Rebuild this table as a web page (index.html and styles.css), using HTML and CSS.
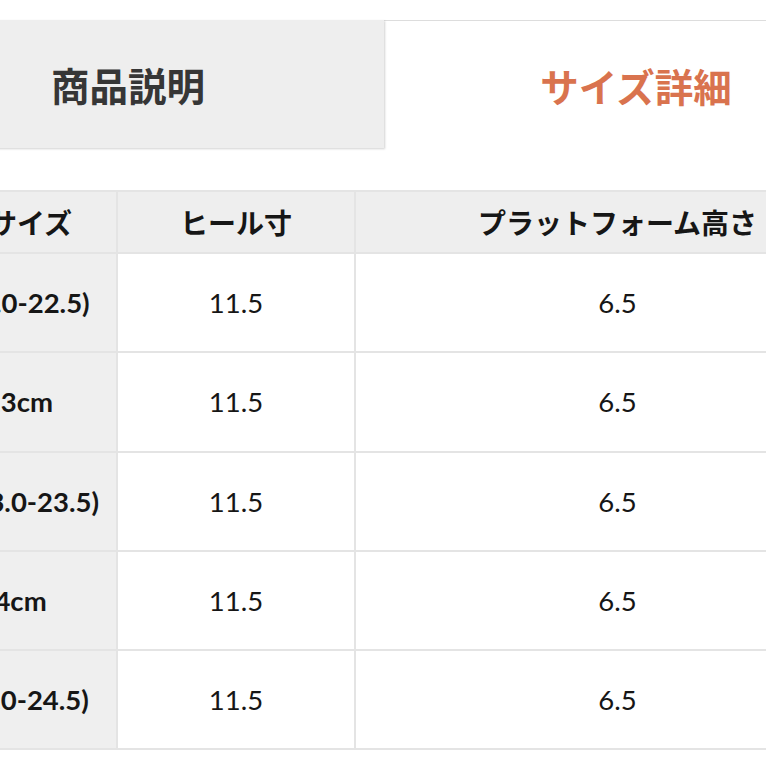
FILE: index.html
```html
<!DOCTYPE html>
<html lang="ja">
<head>
<meta charset="utf-8">
<title>サイズ詳細</title>
<link rel="stylesheet" href="styles.css">
</head>
<body>
<div class="page">
  <div class="tabs">
    <div class="tab tab-inactive">商品説明</div>
    <div class="tab tab-active">サイズ詳細</div>
  </div>
  <table class="size-table">
    <colgroup>
      <col class="col-size">
      <col class="col-heel">
      <col class="col-plat">
    </colgroup>
    <thead>
      <tr>
        <th>日本サイズ</th>
        <th>ヒール寸</th>
        <th>プラットフォーム高さ</th>
      </tr>
    </thead>
    <tbody>
      <tr><th class="row-head">XS (22.0-22.5)</th><td>11.5</td><td>6.5</td></tr>
      <tr><th class="row-head">M 23cm</th><td>11.5</td><td>6.5</td></tr>
      <tr><th class="row-head">M/L (23.0-23.5)</th><td>11.5</td><td>6.5</td></tr>
      <tr><th class="row-head">L 24cm</th><td>11.5</td><td>6.5</td></tr>
      <tr><th class="row-head">XL (24.0-24.5)</th><td>11.5</td><td>6.5</td></tr>
    </tbody>
  </table>
</div>
</body>
</html>
```

FILE: styles.css
```css
html, body {
  margin: 0;
  padding: 0;
  background: #ffffff;
  overflow: hidden;
}
.page {
  padding-top: 20px;
  font-family: Lato, "Noto Sans CJK JP", sans-serif;
}
.tabs {
  display: flex;
  height: 128px;
  width: 1016px;
  margin-left: -128px;
}
.tab {
  display: flex;
  align-items: center;
  justify-content: center;
  font-family: "Noto Sans CJK JP", sans-serif;
  font-weight: 700;
  font-size: 38.5px;
  box-sizing: border-box;
}
.tab-inactive {
  flex: 0 0 512px;
  background: #eeeeee;
  color: #363636;
  box-shadow: 1px 1px 2px rgba(0, 0, 0, 0.18);
  position: relative;
  z-index: 1;
}
.tab-active {
  flex: 0 0 504px;
  background: #ffffff;
  color: #d9734e;
  border-top: 1px solid #dddddd;
}
.size-table {
  margin-top: 42px;
  margin-left: -113px;
  width: 992px;
  border-collapse: collapse;
  table-layout: fixed;
  color: #161616;
}
.col-size { width: 229px; }
.col-heel { width: 238px; }
.col-plat { width: 525px; }
.size-table th,
.size-table td {
  border: 2px solid #e4e4e4;
  text-align: center;
  padding: 0;
  white-space: nowrap;
}
.size-table thead th {
  height: 60px;
  background: #eeeeee;
  font-family: "Noto Sans CJK JP", sans-serif;
  font-weight: 700;
  font-size: 28px;
}
.size-table tbody td,
.size-table tbody th {
  height: 97.3px;
  font-size: 27.5px;
}
.size-table tbody td {
  font-weight: 400;
  background: #ffffff;
}
.row-head {
  background: #efefef;
  font-weight: 700;
}
```
